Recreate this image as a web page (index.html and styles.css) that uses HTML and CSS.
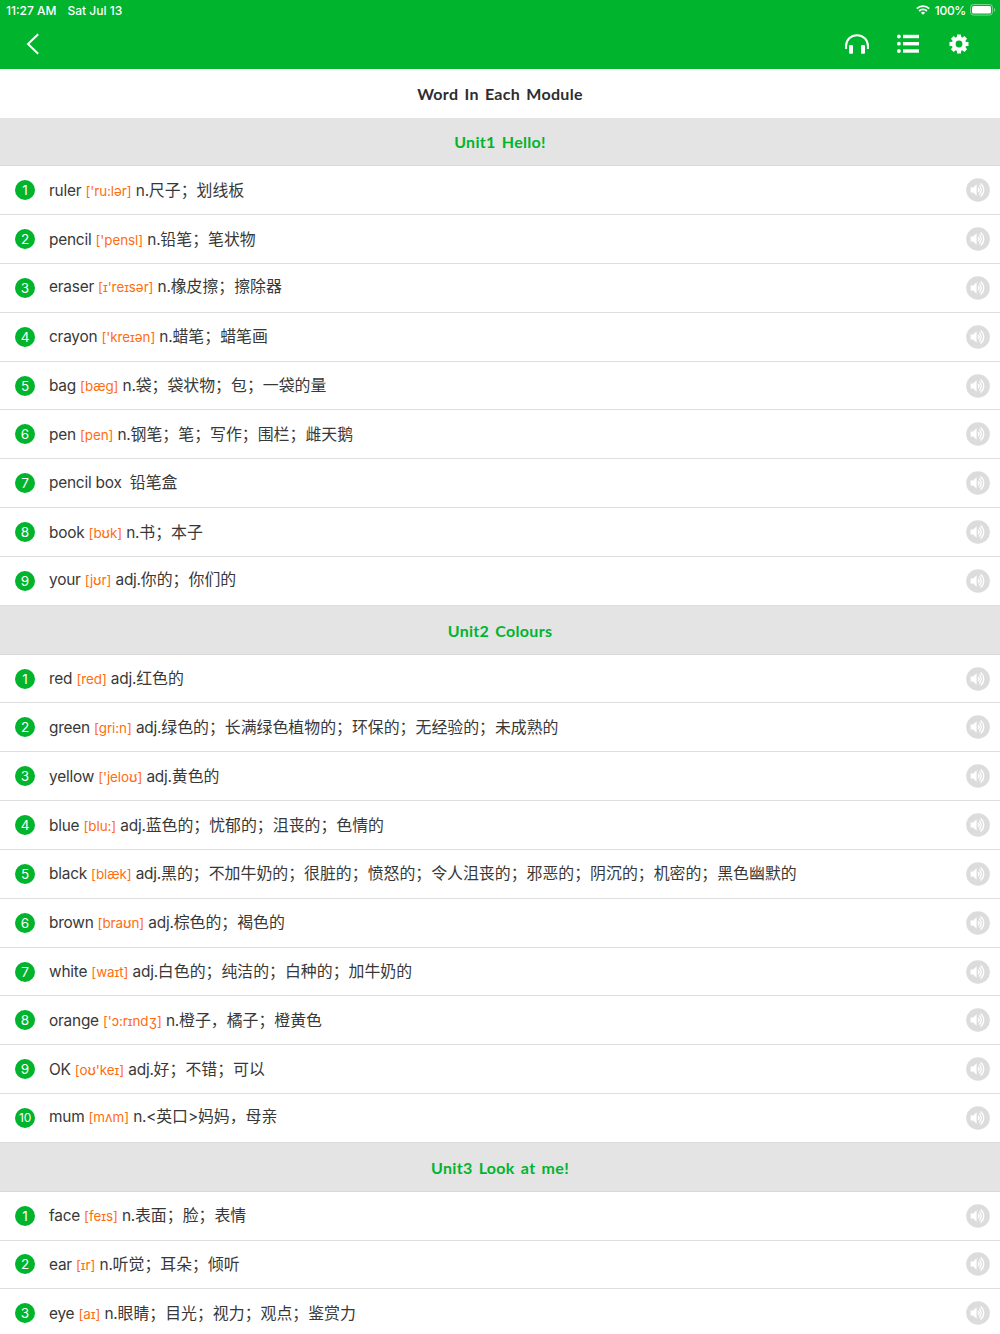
FILE: index.html
```html
<!DOCTYPE html>
<html lang="en">
<head>
  <meta charset="UTF-8">
  <meta name="viewport" content="width=device-width, initial-scale=1.0">
  <title>Word In Each Module</title>
  <link rel="stylesheet" href="styles.css">
</head>
<body>
  <svg class="sprite" width="0" height="0">
    <symbol id="speaker" viewBox="0 0 24 24">
      <circle cx="12" cy="12" r="11.8" fill="#dcdcdc"/>
      <path d="M4.6 9.6h2.6l3.4-3.4v11.6l-3.400-3.400H4.600z" fill="#fff"/>
      <path d="M12.2 10a3 3 0 0 1 0 4M13.300 7.600a6 6 0 0 1 0 8.800M14.600 5.400a8.600 8.600 0 0 1 0 13.200" fill="none" stroke="#fff" stroke-width="1.3"/>
    </symbol>
  </svg>

  <header class="header">
    <div class="status">
      <span class="time">11:27 AM</span>
      <span class="date">Sat Jul 13</span>
      <svg class="wifi" width="14" height="10" viewBox="0 0 14 10" fill="none" stroke="#fff" stroke-width="1.8">
        <path d="M.8 3.700a8.800 8.800 0 0 1 12.400 0M3.100 6a5.600 5.600 0 0 1 7.800 0"/>
        <path d="M7 9.800L4.900 7.700a3 3 0 0 1 4.200 0z" fill="#fff" stroke="none"/>
      </svg>
      <span class="percent">100%</span>
      <svg class="battery" width="26" height="12" viewBox="0 0 26 12">
        <rect x=".5" y=".5" width="22" height="10.6" rx="3" fill="none" stroke="#fff" stroke-opacity=".45"/>
        <rect x="2" y="2" width="19" height="7.6" rx="1.6" fill="#fff"/>
        <path d="M24 4v3.8q1.3-.6 1.3-1.9T24 4z" fill="#fff" fill-opacity=".45"/>
      </svg>
    </div>
    <nav class="nav">
      <svg class="back" width="14" height="22" viewBox="0 0 14 22" fill="none" stroke="#fff" stroke-width="2">
        <path d="M12.2 1.3L2 11l10.2 9.7"/>
      </svg>
      <svg class="phones" width="24" height="20" viewBox="0 0 24 20">
        <path d="M1.1 15V12C1.1 5.8 5.8 1.2 12 1.2S22.9 5.8 22.9 12v3" fill="none" stroke="#fff" stroke-width="2"/>
        <rect x="4" y="11" width="4" height="8.8" rx="1" fill="#fff"/>
        <rect x="16" y="11" width="4" height="8.8" rx="1" fill="#fff"/>
      </svg>
      <svg class="list" width="22" height="20" viewBox="0 0 22 20" fill="#fff">
        <circle cx="1.9" cy="2.5" r="1.9"/><rect x="6" y=".8" width="16" height="3.4"/>
        <circle cx="1.9" cy="9.7" r="1.9"/><rect x="6" y="8" width="16" height="3.4"/>
        <circle cx="1.9" cy="17" r="1.9"/><rect x="6" y="15.3" width="16" height="3.4"/>
      </svg>
      <svg class="gear" width="20" height="20" viewBox="-10 -10 20 20">
        <circle r="5.3" fill="none" stroke="#fff" stroke-width="3.8"/>
        <g fill="#fff">
          <path id="tooth" d="M-2.3-6L-1.9-9.500h3.800L2.300-6zM-2.300 6L-1.900 9.500h3.800L2.300 6z"/>
          <use href="#tooth" transform="rotate(45)"/>
          <use href="#tooth" transform="rotate(90)"/>
          <use href="#tooth" transform="rotate(135)"/>
        </g>
      </svg>
    </nav>
  </header>

  <h1 class="title">Word In Each Module</h1>

  <h2 class="unit">Unit1 Hello!</h2>
  <ul class="words">
    <li><b>1</b><p>ruler <i>['ru:lər]</i> n.<span>尺子；划线板</span></p><svg><use href="#speaker"/></svg></li>
    <li><b>2</b><p>pencil <i>['pensl]</i> n.<span>铅笔；笔状物</span></p><svg><use href="#speaker"/></svg></li>
    <li><b>3</b><p class="up">eraser <i>[ɪ'reɪsər]</i> n.<span>橡皮擦；擦除器</span></p><svg><use href="#speaker"/></svg></li>
    <li><b>4</b><p>crayon <i>['kreɪən]</i> n.<span>蜡笔；蜡笔画</span></p><svg><use href="#speaker"/></svg></li>
    <li><b>5</b><p>bag <i>[bæg]</i> n.<span>袋；袋状物；包；一袋的量</span></p><svg><use href="#speaker"/></svg></li>
    <li><b>6</b><p>pen <i>[pen]</i> n.<span>钢笔；笔；写作；围栏；雌天鹅</span></p><svg><use href="#speaker"/></svg></li>
    <li><b>7</b><p class="up">pencil box&nbsp; <span>铅笔盒</span></p><svg><use href="#speaker"/></svg></li>
    <li><b>8</b><p>book <i>[bʊk]</i> n.<span>书；本子</span></p><svg><use href="#speaker"/></svg></li>
    <li><b>9</b><p class="up">your <i>[jʊr]</i> adj.<span>你的；你们的</span></p><svg><use href="#speaker"/></svg></li>
  </ul>

  <h2 class="unit">Unit2 Colours</h2>
  <ul class="words">
    <li><b>1</b><p>red <i>[red]</i> adj.<span>红色的</span></p><svg><use href="#speaker"/></svg></li>
    <li><b>2</b><p>green <i>[gri:n]</i> adj.<span>绿色的；长满绿色植物的；环保的；无经验的；未成熟的</span></p><svg><use href="#speaker"/></svg></li>
    <li><b>3</b><p>yellow <i>['jeloʊ]</i> adj.<span>黄色的</span></p><svg><use href="#speaker"/></svg></li>
    <li><b>4</b><p>blue <i>[blu:]</i> adj.<span>蓝色的；忧郁的；沮丧的；色情的</span></p><svg><use href="#speaker"/></svg></li>
    <li><b>5</b><p>black <i>[blæk]</i> adj.<span>黑的；不加牛奶的；很脏的；愤怒的；令人沮丧的；邪恶的；阴沉的；机密的；黑色幽默的</span></p><svg><use href="#speaker"/></svg></li>
    <li><b>6</b><p>brown <i>[braʊn]</i> adj.<span>棕色的；褐色的</span></p><svg><use href="#speaker"/></svg></li>
    <li><b>7</b><p>white <i>[waɪt]</i> adj.<span>白色的；纯洁的；白种的；加牛奶的</span></p><svg><use href="#speaker"/></svg></li>
    <li><b>8</b><p>orange <i>['ɔ:rɪndʒ]</i> n.<span>橙子，橘子；橙黄色</span></p><svg><use href="#speaker"/></svg></li>
    <li><b>9</b><p>OK <i>[oʊ'keɪ]</i> adj.<span>好；不错；可以</span></p><svg><use href="#speaker"/></svg></li>
    <li><b class="wide">10</b><p class="up">mum <i>[mʌm]</i> n.&lt;<span>英口</span>&gt;<span>妈妈，母亲</span></p><svg><use href="#speaker"/></svg></li>
  </ul>

  <h2 class="unit">Unit3 Look at me!</h2>
  <ul class="words">
    <li><b>1</b><p>face <i>[feɪs]</i> n.<span>表面；脸；表情</span></p><svg><use href="#speaker"/></svg></li>
    <li><b>2</b><p>ear <i>[ɪr]</i> n.<span>听觉；耳朵；倾听</span></p><svg><use href="#speaker"/></svg></li>
    <li><b>3</b><p>eye <i>[aɪ]</i> n.<span>眼睛；目光；视力；观点；鉴赏力</span></p><svg><use href="#speaker"/></svg></li>
  </ul>
</body>
</html>
```
FILE: styles.css
```css
* { box-sizing: border-box; margin: 0; padding: 0; }
body { height: 1334px; overflow: hidden; background: #fff; color: #383838; font-family: Inter, "Noto Sans CJK SC", sans-serif; }
.sprite { display: block; }

.header { height: 68.7px; background: #00b42d; color: #fff; }
.status { display: flex; align-items: center; height: 20px; padding: 0 4px 0 6px; font-size: 12px; font-weight: 500; white-space: nowrap; }
.date { margin-left: 11px; }
.wifi { margin-left: auto; }
.percent { margin: 0 4px 0 5px; letter-spacing: -0.3px; }
.nav { display: flex; align-items: center; height: 48.7px; padding: 0 31px 0 26px; }
.phones { margin-left: auto; }
.list { margin-left: 28px; }
.gear { margin-left: 30px; }

.title, .unit { display: flex; align-items: center; justify-content: center; height: 48.83px; padding-top: 1px; color: #2e2e2e; font-family: "Chalkboard SE", "Comic Sans MS", Lato, sans-serif; font-size: 16px; font-weight: 700; letter-spacing: 0.3px; word-spacing: 2px; }
.unit { background: #e4e4e4; color: #00b42d; border-bottom: 1px solid #d9d9d9; }

.words { list-style: none; }
.words li { display: flex; align-items: center; height: 48.83px; padding: 0 10px 0 15px; border-bottom: 1px solid #dedede; }
.words b { display: flex; align-items: center; justify-content: center; flex: none; width: 20px; height: 20px; border-radius: 50%; background: #00b42d; color: #fff; font-size: 13.5px; font-weight: 400; }
.words b.wide { font-size: 12px; letter-spacing: -0.3px; }
.words p { flex: 1; margin-left: 14px; font-size: 15.4px; line-height: 24px; letter-spacing: -0.22px; white-space: nowrap; }
.words p.up { margin-top: -2px; }
.words i { color: #ff6d0f; font-size: 13.4px; font-style: normal; letter-spacing: -0.05px; }
.words span { font-family: "Noto Sans CJK SC", sans-serif; font-size: 15.9px; font-weight: 400; letter-spacing: 0; }
.words svg { display: block; flex: none; width: 24px; height: 24px; }
```
